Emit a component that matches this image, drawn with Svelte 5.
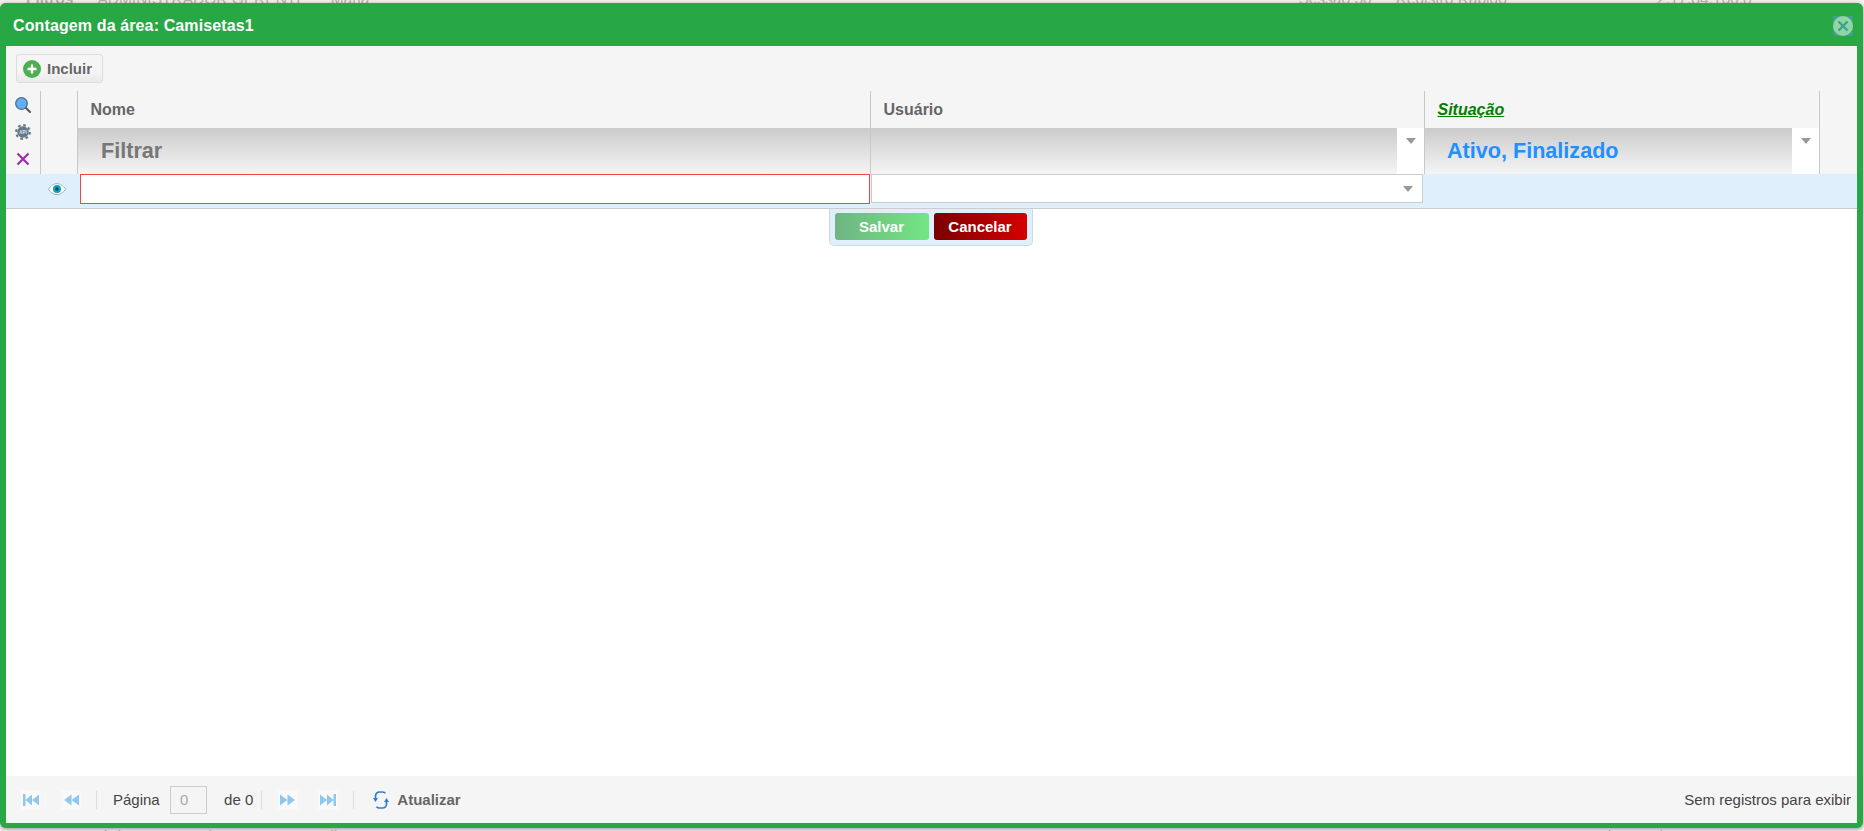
<script lang="ts">
  let nome = $state('');

  const columns = [
    { label: 'Nome', filter: 'Filtrar' },
    { label: 'Usuário', filter: '', arrow: true },
    { label: 'Situação', filter: 'Ativo, Finalizado', arrow: true, sorted: true },
  ];
</script>

<div class="page">
  <div class="backdrop-top">
    <span class="back-title">Filtros</span>
    <span>ADMINISTRADOR GERENTE</span>
    <span>Maria</span>
    <span class="back-session">Sessão 30</span>
    <span>Registro Rápido</span>
    <span class="back-ip">2.17.84.166.8</span>
  </div>
  <div class="backdrop-bottom">
    <span>Página</span>
    <span>de 1</span>
    <span>Atualizar</span>
    <span class="back-count">1 a 5 de 5 registros</span>
  </div>
</div>

<section class="window">
  <header class="title-bar">
    <h1>Contagem da área: Camisetas1</h1>
    <button class="close" aria-label="Fechar">
      <svg viewBox="0 0 20 20" width="20" height="20">
        <rect width="20" height="20" fill="#3f9f8c" />
        <circle cx="10" cy="10" r="10" fill="#8fd6a4" />
        <path d="M5.500 5.500l9 9M14.500 5.500l-9 9" stroke="#3f9f8c" stroke-width="2.400" />
      </svg>
    </button>
  </header>

  <div class="toolbar">
    <button class="btn-add">
      <svg viewBox="0 0 18 18" width="18" height="18">
        <circle cx="9" cy="9" r="9" fill="#4caf50" />
        <path d="M9 4.500v9M4.500 9h9" stroke="#fff" stroke-width="2.400" />
      </svg>
      Incluir
    </button>
  </div>

  <div class="grid-head">
    <div class="tools">
      <svg viewBox="0 0 16 16" width="16" height="16">
        <path d="M10.500 10.500l4.500 4.500" stroke="#555" stroke-width="2" stroke-linecap="round" />
        <circle cx="6.500" cy="6.500" r="5.800" fill="#5fb0f5" stroke="#4a6f8c" stroke-width="1.300" />
      </svg>
      <svg viewBox="0 0 18 18" width="16" height="16">
        <circle cx="9" cy="9" r="6.500" fill="#65798a" />
        <circle cx="9" cy="9" r="7.700" fill="none" stroke="#65798a" stroke-width="2.400" stroke-dasharray="3 3.050" />
        <text x="9" y="10.800" class="api">API</text>
      </svg>
      <svg viewBox="0 0 16 16" width="16" height="16">
        <path d="M2.500 2.500l11 11M13.500 2.500l-11 11" stroke="#a02cb0" stroke-width="2.200" />
      </svg>
    </div>
    <div class="spacer"></div>
    {#each columns as col}
      <div class="col-title" class:sorted={col.sorted}><span>{col.label}</span></div>
    {/each}
    <div class="end"></div>
    {#each columns as col}
      <div class="col-filter" class:blue={col.sorted}>
        <div class="filter-text">{col.filter}</div>
        {#if col.arrow}
          <div class="filter-arrow"><i class="caret"></i></div>
        {/if}
      </div>
    {/each}
    <div class="end"></div>
  </div>

  <div class="edit-row">
    <div class="eye-cell">
      <svg viewBox="0 0 18 12" width="18" height="12">
        <path d="M.4 6.300C3 2.300 6 .6 9 .6s6 1.700 8.600 5.700C15 10 12 11.600 9 11.600S3 10 .4 6.300z" fill="#fff" stroke="#9db4c0" stroke-width="1" />
        <circle cx="9" cy="6" r="4" fill="#0fa3b8" />
        <circle cx="9" cy="6" r="1.700" fill="#0b5266" />
      </svg>
    </div>
    <div class="input-cell"><input bind:value={nome} /></div>
    <div class="select-cell"><div class="select"><i class="caret"></i></div></div>
  </div>

  <div class="content">
    <div class="actions">
      <button class="save">Salvar</button>
      <button class="cancel">Cancelar</button>
    </div>
  </div>

  <footer class="pager">
    <div class="nav">
      <button aria-label="Primeira">
        <svg viewBox="0 0 20 20" width="20" height="20"><path d="M2 4h2.500v12H2zM11 4.500v11L4.500 10zM18 4.500v11L11 10z" fill="#8fc8ee" /></svg>
      </button>
      <button aria-label="Anterior">
        <svg viewBox="0 0 20 20" width="20" height="20"><path d="M10.500 4.500v11L3 10zM18 4.500v11L10.500 10z" fill="#8fc8ee" /></svg>
      </button>
    </div>
    <i class="sep"></i>
    <span>Página</span>
    <input class="page-input" value="0" disabled />
    <span>de 0</span>
    <i class="sep after-total"></i>
    <div class="nav">
      <button aria-label="Próxima">
        <svg viewBox="0 0 20 20" width="20" height="20"><path d="M2 4.500v11L9.500 10zM9.500 4.500v11L17 10z" fill="#8fc8ee" /></svg>
      </button>
      <button aria-label="Última">
        <svg viewBox="0 0 20 20" width="20" height="20"><path d="M2 4.500v11L9 10zM9 4.500v11L15.500 10zM15.500 4H18v12h-2.500z" fill="#8fc8ee" /></svg>
      </button>
    </div>
    <i class="sep"></i>
    <button class="refresh">
      <svg viewBox="0 0 16 18" width="16" height="18">
        <path d="M2.500 7.500V5a4 4 0 0 1 4-4h3a4 4 0 0 1 3 1.300M13.500 10.500V13a4 4 0 0 1-4 4h-3a4 4 0 0 1-3-1.300" fill="none" stroke="#2f7fd0" stroke-width="1.700" />
        <path d="M0 7h5l-2.500 4zM11 11h5l-2.500-4z" fill="#2f7fd0" />
      </svg>
      Atualizar
    </button>
    <span class="status">Sem registros para exibir</span>
  </footer>
</section>

<style>
  :global(body) {
    margin: 0;
    font-family: "Liberation Sans", Arial, sans-serif;
    background: #f2f2f2;
    overflow: hidden;
  }

  .page {
    height: 831px;
    overflow: hidden;
    display: flex;
    flex-direction: column;
    justify-content: space-between;
    color: #b4b4b4;
    font-size: 15.500px;
  }

  .backdrop-top {
    display: flex;
    gap: 24px;
    padding-left: 26px;
    margin-top: -10px;
  }

  .back-title {
    font-weight: bold;
  }

  .back-session {
    margin-left: 905px;
  }

  .back-ip {
    margin-left: 126px;
  }

  .backdrop-bottom {
    display: flex;
    gap: 65px;
    padding-left: 90px;
    margin-bottom: -14px;
  }

  .back-count {
    margin-left: 1140px;
  }

  .window {
    position: absolute;
    left: 0;
    top: 3px;
    width: 1851px;
    height: 820px;
    display: flex;
    flex-direction: column;
    border: solid #28a745;
    border-width: 0 6px 5px 6px;
    border-radius: 6px;
    background: #fff;
    box-shadow: 0 1px 4px rgba(0, 0, 0, 0.4);
  }

  .title-bar {
    height: 43px;
    box-sizing: border-box;
    margin: 0 -6px;
    padding: 3px 10px 0 13px;
    display: flex;
    align-items: center;
    justify-content: space-between;
    background: #28a745;
    border-radius: 6px 6px 0 0;
    flex: none;
  }

  h1 {
    margin: 0;
    color: #fff;
    font-size: 16px;
    letter-spacing: 0.12px;
    font-weight: bold;
  }

  .close {
    padding: 0;
    border: 0;
    width: 20px;
    height: 20px;
    background: none;
    display: block;
  }

  .close svg {
    display: block;
  }

  .toolbar {
    height: 45px;
    flex: none;
    background: #f5f5f5;
    padding: 8px 0 0 10px;
    box-sizing: border-box;
  }

  .btn-add {
    width: 87px;
    height: 29px;
    display: flex;
    align-items: center;
    gap: 6px;
    padding: 0 0 0 6px;
    border: 1px solid #ddd;
    border-radius: 3px;
    background: linear-gradient(#f5f5f5 60%, #e9e9e9);
    color: #666;
    font: bold 15px "Liberation Sans", Arial, sans-serif;
  }

  .grid-head {
    flex: none;
    display: grid;
    grid-template-columns: 35px 37px 793px 554px 395px 1fr;
    grid-template-rows: 37px 46px;
    background: #f5f5f5;
  }

  .tools {
    grid-row: 1 / span 2;
    display: flex;
    flex-direction: column;
    align-items: center;
    gap: 11px;
    padding-top: 6px;
    box-sizing: border-box;
    border-right: 1px solid #c8c8c8;
  }

  .api {
    font: bold 5px "Liberation Sans", Arial, sans-serif;
    fill: #dfe6ea;
    text-anchor: middle;
  }

  .spacer {
    grid-row: 1 / span 2;
    border-right: 1px solid #c8c8c8;
  }

  .col-title {
    display: flex;
    align-items: center;
    padding-left: 12.500px;
    border-right: 1px solid #c8c8c8;
    color: #666;
    font-size: 16px;
    font-weight: bold;
  }

  .col-title.sorted {
    color: #008000;
    font-style: italic;
    text-decoration: underline;
  }

  .col-filter {
    display: flex;
    border-right: 1px solid #c8c8c8;
  }

  .filter-text {
    flex: 1;
    padding: 10px 0 0 23px;
    box-sizing: border-box;
    background: linear-gradient(#cbcbcb, #f5f5f5);
    color: #777;
    font-size: 21.600px;
    font-weight: bold;
  }

  .blue .filter-text {
    padding-left: 22px;
    color: #1e90ff;
  }

  .filter-arrow {
    width: 27px;
    background: #fff;
    padding: 10px 0 0 9px;
    box-sizing: border-box;
  }

  .caret {
    display: block;
    width: 0;
    height: 0;
    border: 5.500px solid transparent;
    border-top: 6px solid #999;
    border-bottom: 0;
  }

  .edit-row {
    flex: none;
    height: 34px;
    display: grid;
    grid-template-columns: 72px 793px 554px 1fr;
    background: #dff0fc;
    border-bottom: 1px solid #ccc;
  }

  .eye-cell {
    display: flex;
    align-items: flex-start;
    justify-content: flex-end;
    padding: 9px 12px 0 0;
  }

  .input-cell {
    padding: 0 1px 0 2px;
  }

  .input-cell input {
    display: block;
    width: 100%;
    height: 30px;
    box-sizing: border-box;
    border: 1px solid #e74c3c;
    background: #fff;
    outline: none;
  }

  .select {
    width: 552px;
    height: 29px;
    box-sizing: border-box;
    background: #fff;
    border: 1px solid #ccc;
    display: flex;
    justify-content: flex-end;
    align-items: center;
    padding-right: 9px;
  }

  .content {
    flex: 1;
    display: flex;
    justify-content: center;
    align-items: flex-start;
    padding-right: 2px;
    background: #fff;
  }

  .actions {
    display: flex;
    gap: 5px;
    padding: 4px 5px 5px;
    background: #dff0fc;
    border: 1px solid #cbd9e6;
    border-top: 0;
    border-radius: 0 0 5px 5px;
  }

  .actions button {
    width: 94px;
    height: 27px;
    border: 0;
    border-radius: 3px;
    color: #fff;
    font: bold 15px "Liberation Sans", Arial, sans-serif;
  }

  .save {
    background: linear-gradient(90deg, #6fb583, #72e683);
  }

  .actions .cancel {
    width: 93px;
    background: linear-gradient(90deg, #7a0000, #d60000);
  }

  .pager {
    flex: none;
    height: 47px;
    box-sizing: border-box;
    display: flex;
    align-items: center;
    background: #f5f5f5;
    padding: 0 6px 0 15px;
    font-size: 15px;
    color: #444;
  }

  .nav {
    display: flex;
    gap: 20px;
  }

  .nav button {
    display: block;
    width: 20px;
    height: 20px;
    padding: 0;
    border: 0;
    background: #f9f9f9;
  }

  .nav svg {
    display: block;
  }

  .sep {
    width: 1px;
    height: 18px;
    background: #ddd;
    margin: 0 16px 0 15px;
  }

  .page-input {
    width: 37px;
    height: 28px;
    margin: 0 17px 0 10.400px;
    box-sizing: border-box;
    border: 1px solid #ccc;
    background: #f5f5f5;
    color: #aaa;
    padding: 0 0 0 9px;
    font: 15px "Liberation Sans", Arial, sans-serif;
  }

  .after-total {
    margin-left: 8px;
  }

  .refresh {
    display: flex;
    align-items: center;
    gap: 8px;
    margin-left: 3px;
    padding: 0;
    border: 0;
    background: none;
    color: #666;
    font: bold 15px "Liberation Sans", Arial, sans-serif;
  }

  .status {
    margin-left: auto;
    color: #444;
    font-size: 15px;
  }
</style>
